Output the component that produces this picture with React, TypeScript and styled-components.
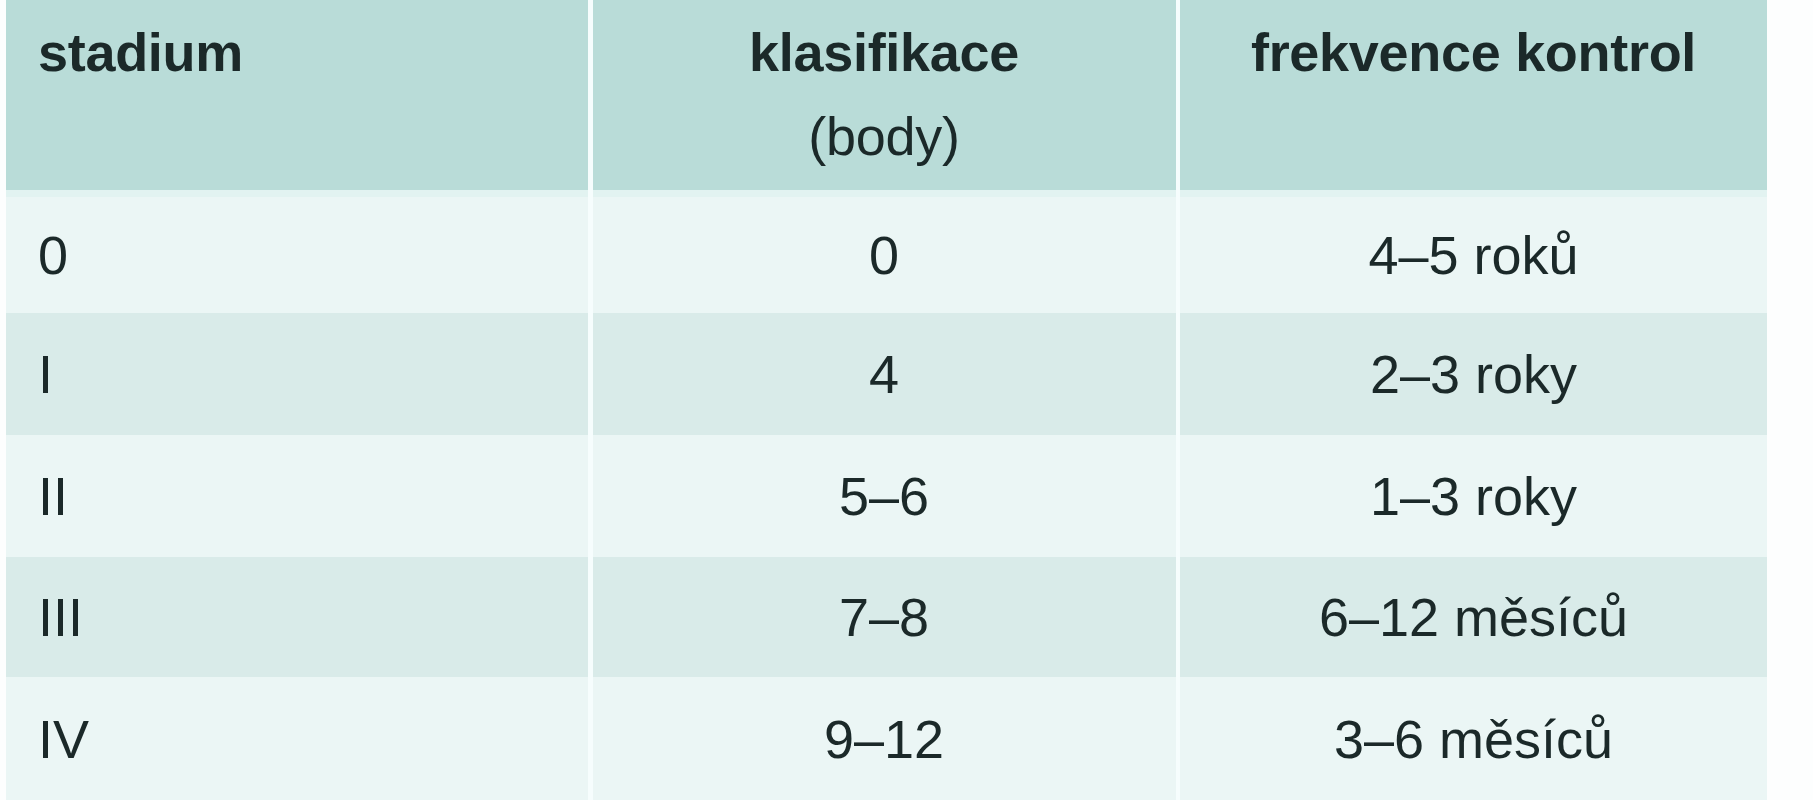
import React from 'react';
import styled, { createGlobalStyle } from 'styled-components';

const GlobalStyle = createGlobalStyle`
  html, body {
    margin: 0;
    padding: 0;
    background: #fdfefe;
  }
  body {
    font-family: "Liberation Sans", Arial, sans-serif;
    color: #1b2929;
    overflow: hidden;
  }
`;

const Page = styled.div`
  width: 1813px;
  height: 800px;
  padding-left: 6px;
  box-sizing: border-box;
  background: #fdfefe;
  overflow: hidden;
`;

const Table = styled.div`
  display: grid;
  grid-template-columns: 582px 583px 587px;
  column-gap: 4.5px;
  width: 1761px;
  background: #f6fdfd;
`;

const HeadCell = styled.div<{ align: 'left' | 'center' }>`
  height: 197px;
  box-sizing: border-box;
  padding: 10px 32px 0;
  background: #b9dcd8;
  border-bottom: 7px solid #e2f3f1;
  font-size: 54px;
  line-height: 84px;
  font-weight: 700;
  text-align: ${p => p.align};
  letter-spacing: -0.3px;
`;

const SubLabel = styled.span`
  display: block;
  font-weight: 400;
`;

const Cell = styled.div<{ align: 'left' | 'center'; shade: boolean; h: number }>`
  height: ${p => p.h}px;
  box-sizing: border-box;
  padding: 0 32px;
  display: flex;
  align-items: center;
  justify-content: ${p => (p.align === 'left' ? 'flex-start' : 'center')};
  background: ${p => (p.shade ? '#d9ebe9' : '#ebf6f5')};
  font-size: 54px;
  font-weight: 400;
`;

interface Row {
  stage: string;
  points: string;
  freq: string;
}

const rows: Row[] = [
  { stage: '0', points: '0', freq: '4–5 roků' },
  { stage: 'I', points: '4', freq: '2–3 roky' },
  { stage: 'II', points: '5–6', freq: '1–3 roky' },
  { stage: 'III', points: '7–8', freq: '6–12 měsíců' },
  { stage: 'IV', points: '9–12', freq: '3–6 měsíců' },
];

const heights = [116, 122, 122, 120, 123];

const App: React.FC = () => {
  return (
    <Page>
      <GlobalStyle />
      <Table>
        <HeadCell align="left">stadium</HeadCell>
        <HeadCell align="center">
          klasifikace
          <SubLabel>(body)</SubLabel>
        </HeadCell>
        <HeadCell align="center">frekvence kontrol</HeadCell>
        {rows.map((row, i) => (
          <React.Fragment key={row.stage}>
            <Cell align="left" shade={i % 2 === 1} h={heights[i]}>{row.stage}</Cell>
            <Cell align="center" shade={i % 2 === 1} h={heights[i]}>{row.points}</Cell>
            <Cell align="center" shade={i % 2 === 1} h={heights[i]}>{row.freq}</Cell>
          </React.Fragment>
        ))}
      </Table>
    </Page>
  );
};

export default App;
